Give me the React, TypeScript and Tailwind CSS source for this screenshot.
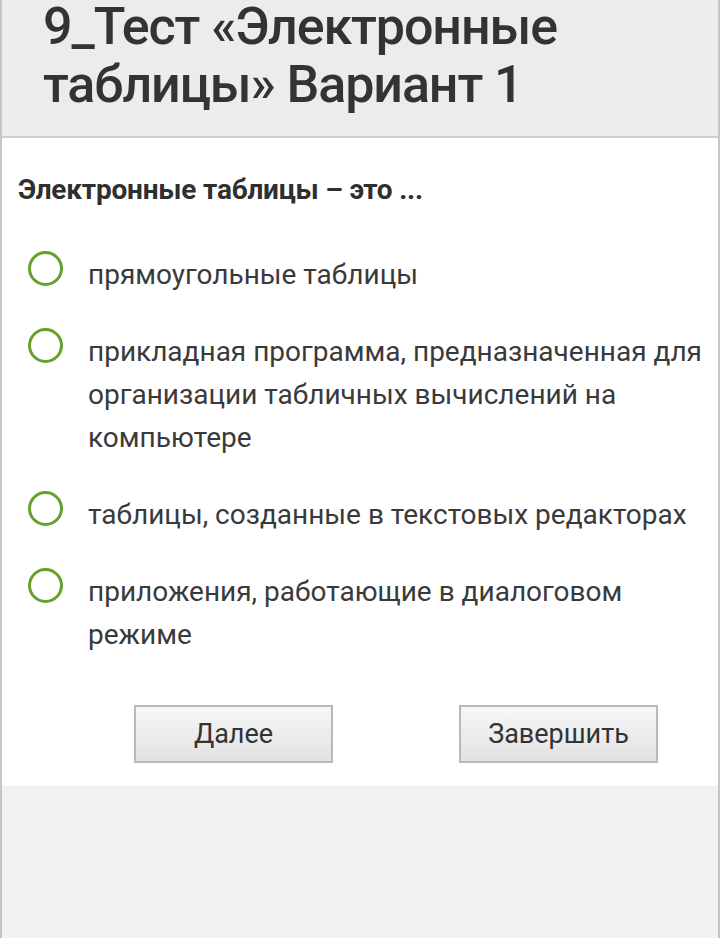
const options = [
  "прямоугольные таблицы",
  "прикладная программа, предназначенная для организации табличных вычислений на компьютере",
  "таблицы, созданные в текстовых редакторах",
  "приложения, работающие в диалоговом режиме",
];

const App = () => {
  return (
    <div className="flex min-h-[938px] w-full flex-col border-x-2 border-[#c6c6c6] bg-[#f2f2f2] font-['Roboto',sans-serif] text-[#333333]">
      <div className="flex h-[138px] items-end overflow-hidden border-b-2 border-[#cfcfcf] bg-[#ececec] pb-[22px] pl-[41px]">
        <h1 className="text-[52px] font-medium leading-[58px] tracking-[-1.1px] text-[#333333]">
          9_Тест «Электронные
          <br />
          таблицы» Вариант 1
        </h1>
      </div>
      <div className="flex flex-col bg-white pb-[23px]">
        <p className="pl-[16px] pt-[35px] text-[28px] font-bold leading-[34px] tracking-[-0.2px] text-[#2f2f2f]">
          Электронные таблицы – это ...
        </p>
        <div className="mt-[46px] flex flex-col gap-[34px] pr-[8px]">
          {options.map((o) => (
            <label key={o} className="flex items-start">
              <span className="ml-[26px] mt-[-2px] flex size-[35px] shrink-0 rounded-full border-[3px] border-[#67a12b]" />
              <span className="ml-[25px] text-[28px] leading-[43px] text-[#3a3a3a]">
                {o}
              </span>
            </label>
          ))}
        </div>
        <div className="mt-[49px] flex gap-[126px] pl-[132px]">
          <button className="h-[58px] w-[199px] border-2 border-[#b9b9b9] bg-gradient-to-b from-[#f7f7f7] to-[#e2e2e2] text-[27px] text-[#333333]">
            Далее
          </button>
          <button className="h-[58px] w-[199px] border-2 border-[#b9b9b9] bg-gradient-to-b from-[#f7f7f7] to-[#e2e2e2] text-[27px] text-[#333333]">
            Завершить
          </button>
        </div>
      </div>
    </div>
  );
};

export default App;
